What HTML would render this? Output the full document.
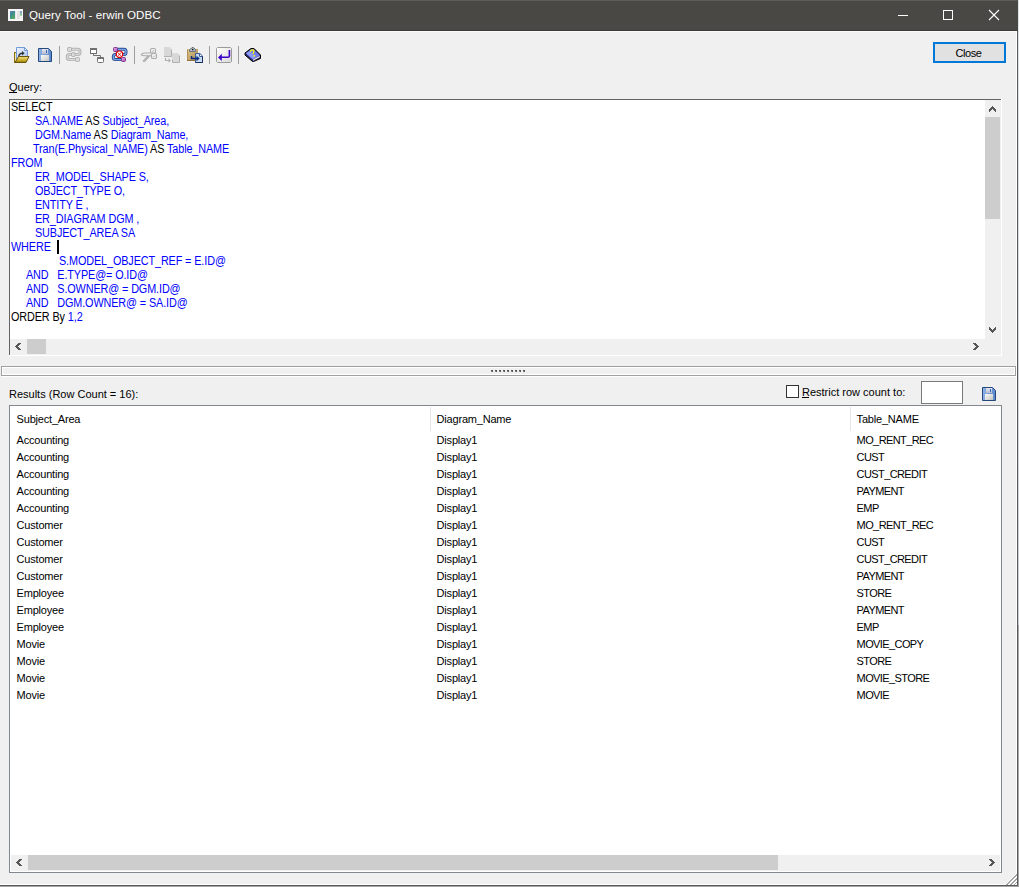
<!DOCTYPE html>
<html><head><meta charset="utf-8">
<style>
*{box-sizing:border-box}
html,body{margin:0;padding:0}
body{width:1019px;height:887px;position:relative;overflow:hidden;background:#f0f0f0;font-family:"Liberation Sans",sans-serif;color:#000}
.a{position:absolute}
.t{position:absolute;white-space:pre;line-height:14px;font-size:11px}
#title{left:0;top:0;width:1018px;height:31px;background:#4a4845}
#q{left:9px;top:99px;width:993px;height:257px;background:#fff}
.qt{position:absolute;white-space:pre;font-size:12px;line-height:14px;color:#0000ff;letter-spacing:-0.1px;transform:scaleX(0.9);transform-origin:0 0}
.k{color:#000}
#grid{left:9px;top:405px;width:993px;height:468px;border:1px solid #828790;background:#fff}
.gr{position:absolute;white-space:pre;font-size:11px;line-height:17px;height:17px;letter-spacing:-0.2px}
</style></head>
<body>
<!-- window frame -->
<div class="a" style="left:1017px;top:0;width:1px;height:886px;background:#5a5a5a"></div>
<div class="a" style="left:1018px;top:0;width:1px;height:625px;background:linear-gradient(#dfe4e9,#c8ced3)"></div><div class="a" style="left:1018px;top:625px;width:1px;height:262px;background:#a8a8a8"></div>
<div class="a" style="left:0;top:885px;width:1018px;height:1px;background:#5a5a5a"></div>
<div class="a" style="left:0;top:886px;width:1019px;height:1px;background:#a6a6a6"></div>
<div class="a" style="left:0;top:884px;width:1017px;height:1px;background:#fff"></div>
<div class="a" style="left:1016px;top:31px;width:1px;height:854px;background:#fff"></div>

<!-- title bar -->
<div id="title" class="a">
  <div class="a" style="left:0;top:0;width:1017px;height:1px;background:#5e5c59"></div>
  <div class="a" style="left:0;top:30px;width:1017px;height:1px;background:#3c3a37"></div>
</div>
<div class="a" style="left:0;top:31px;width:1017px;height:1px;background:#fafafa"></div>

<!-- title icon -->
<svg class="a" style="left:8px;top:9px" width="15" height="12" viewBox="0 0 15 12">
  <rect x="0" y="0" width="15" height="12" fill="#f6f6f8"/>
  <defs><linearGradient id="tg" x1="0" y1="0" x2="0.6" y2="1"><stop offset="0" stop-color="#6a88bc"/><stop offset="0.45" stop-color="#3d8a90"/><stop offset="1" stop-color="#55aa66"/></linearGradient>
  <linearGradient id="tg2" x1="0" y1="0" x2="0" y2="1"><stop offset="0" stop-color="#7a9cc8"/><stop offset="1" stop-color="#a8d8a0"/></linearGradient></defs>
  <rect x="2" y="2" width="5" height="8" fill="url(#tg)"/>
  <rect x="7" y="2" width="1" height="8" fill="#e8e4ee"/>
  <rect x="9" y="2" width="3" height="8" fill="#e2e2e2"/>
  <rect x="12" y="2" width="2" height="5" fill="url(#tg2)"/>
</svg>
<div class="t" style="left:29px;top:7.4px;font-size:11.6px;line-height:16px;color:#fff;letter-spacing:0.05px">Query Tool - erwin ODBC</div>
<!-- caption buttons -->
<div class="a" style="left:898px;top:15px;width:10px;height:1px;background:#fff"></div>
<div class="a" style="left:943px;top:10px;width:10px;height:10px;border:1px solid #fff"></div>
<svg class="a" style="left:988px;top:9px" width="12" height="12" viewBox="0 0 12 12"><path d="M1 1 L11 11 M11 1 L1 11" stroke="#fff" stroke-width="1.1"/></svg>

<!-- toolbar icons (page coordinates) -->
<svg class="a" style="left:0;top:0" width="1019" height="70" viewBox="0 0 1019 70">
 <defs>
  <linearGradient id="docg" x1="0" y1="0" x2="1" y2="1"><stop offset="0" stop-color="#f2f6fe"/><stop offset="1" stop-color="#a9c2ee"/></linearGradient>
  <linearGradient id="foldg" x1="0" y1="0" x2="0" y2="1"><stop offset="0" stop-color="#efe08a"/><stop offset="0.6" stop-color="#cdb22a"/><stop offset="1" stop-color="#8c7410"/></linearGradient>
  <linearGradient id="flop" x1="0" y1="0" x2="1" y2="0"><stop offset="0" stop-color="#8fb2e6"/><stop offset="1" stop-color="#5c88cc"/></linearGradient>
  <linearGradient id="lab" x1="0" y1="0" x2="1" y2="1"><stop offset="0" stop-color="#fbfbf6"/><stop offset="1" stop-color="#c4c4c4"/></linearGradient>
  <linearGradient id="shut" x1="0" y1="0" x2="0" y2="1"><stop offset="0" stop-color="#e6e8f0"/><stop offset="1" stop-color="#b6bccc"/></linearGradient>
  <linearGradient id="clipg" x1="0" y1="0" x2="1" y2="1"><stop offset="0" stop-color="#e0c890"/><stop offset="1" stop-color="#a88850"/></linearGradient>
  <linearGradient id="entg" x1="0" y1="0" x2="1" y2="1"><stop offset="0" stop-color="#ffffff"/><stop offset="1" stop-color="#d8d8d8"/></linearGradient>
  <linearGradient id="purp" x1="0" y1="0" x2="1" y2="1"><stop offset="0" stop-color="#f4a8f8"/><stop offset="1" stop-color="#a050b0"/></linearGradient>
 </defs>
 <!-- open -->
 <rect x="14.5" y="52.5" width="2.5" height="10" fill="#f6eaa8" stroke="#8a6d10"/>
 <path d="M16.5 47.5 H24.5 L27.5 50.5 V59.5 H16.5 Z" fill="url(#docg)" stroke="#7399d8"/>
 <path d="M24.5 47.5 V50.5 H27.5 Z" fill="#fff" stroke="#7399d8"/>
 <path d="M18.8 57 C18.8 54.5 20.5 53.2 22.5 53.2" fill="none" stroke="#2c3438" stroke-width="1.4"/>
 <path d="M22 51 L24.6 53.3 L22 55.6 Z" fill="#2c3438"/>
 <path d="M15 62.5 L18.5 56.5 H29 L26 62.5 Z" fill="url(#foldg)" stroke="#6b5508"/>
 <!-- save -->
 <path d="M38.5 48.5 H48.5 L51.5 51.5 V61.5 H38.5 Z" fill="url(#flop)" stroke="#24487a"/>
 <rect x="42" y="49" width="6" height="5" fill="url(#shut)"/>
 <rect x="46" y="50" width="1" height="3" fill="#2f62b8"/>
 <rect x="41" y="55" width="8" height="6" fill="url(#lab)"/>
 <!-- sep -->
 <rect x="59" y="46" width="1" height="18" fill="#a0a0a0"/>
 <!-- chain grey -->
 <g fill="none" stroke-linejoin="round">
  <path d="M70 49.3 H78 Q80 49.3 80 51.5 V52.5 Q80 54.6 78 54.6 H69.5 Q67.2 54.6 67.2 57 V57.5 Q67.2 59.6 69.5 59.6 H77" stroke="#b4b4b4" stroke-width="3"/>
  <path d="M70 49.3 H78 Q80 49.3 80 51.5 V52.5 Q80 54.6 78 54.6 H69.5 Q67.2 54.6 67.2 57 V57.5 Q67.2 59.6 69.5 59.6 H77" stroke="#e2e2e2" stroke-width="1"/>
 </g>
 <rect x="67.5" y="47.5" width="4" height="4" rx="1" fill="#dcdcdc" stroke="#b0b0b0"/>
 <rect x="71.5" y="52.5" width="3.5" height="4" rx="1" fill="#dcdcdc" stroke="#b0b0b0"/>
 <rect x="75.5" y="57.5" width="4" height="4" rx="1" fill="#dcdcdc" stroke="#b0b0b0"/>
 <!-- tree -->
 <rect x="90.5" y="48.5" width="6" height="5" fill="#fff" stroke="#707070"/>
 <rect x="90" y="48" width="7" height="2" fill="#707070"/>
 <path d="M93.5 54 V55.5 H100.5 V57" fill="none" stroke="#707070"/>
 <rect x="97.5" y="57.5" width="6" height="5" rx="1" fill="#fff" stroke="#707070"/>
 <rect x="97" y="57" width="7" height="2" rx="1" fill="#707070"/>
 <!-- chain red -->
 <g fill="none" stroke-linejoin="round">
  <path d="M116 49.3 H124 Q126 49.3 126 51.5 V52.5 Q126 54.6 124 54.6 H115.5 Q113.3 54.6 113.3 57 V57.5 Q113.3 59.6 115.5 59.6 H123" stroke="#2c4a86" stroke-width="3"/>
  <path d="M116 49.3 H124 Q126 49.3 126 51.5 V52.5 Q126 54.6 124 54.6 H115.5 Q113.3 54.6 113.3 57 V57.5 Q113.3 59.6 115.5 59.6 H123" stroke="#74a4f4" stroke-width="1.3"/>
 </g>
 <rect x="113.5" y="47.5" width="4" height="4" rx="1" fill="url(#purp)" stroke="#7a3a8a"/>
 <rect x="121.5" y="57.5" width="4" height="4" rx="1" fill="url(#purp)" stroke="#7a3a8a"/>
 <path d="M118.2 51 H120.8 L122.6 52.8 V55.6 L120.8 57.4 H118.2 L116.4 55.6 V52.8 Z" fill="#fff" stroke="#e00000" stroke-width="1.2"/>
 <path d="M118.2 53 L120.8 55.6 M120.8 53 L118.2 55.6" stroke="#d00000" stroke-width="1"/>
 <!-- sep -->
 <rect x="134" y="46" width="1" height="18" fill="#a0a0a0"/>
 <!-- scissors -->
 <g fill="none" stroke="#acacac" stroke-width="1.1">
  <rect x="150.5" y="48.5" width="5" height="4.5" rx="1.3"/>
  <rect x="151.5" y="53.5" width="5" height="5" rx="1.3"/>
  <path d="M151 53 H145 Q141.5 53.5 141.3 54.8 Q142 55.6 145 55.7 H151.5"/>
  <path d="M149.5 55.8 L144.8 61.2 Q143.8 61.8 143.2 61 L148 55.8"/>
 </g>
 <path d="M152.3 51.8 L153.8 50.2 M153.3 57.3 L154.8 55.7" stroke="#acacac" stroke-width="1"/>
 <!-- copy -->
 <path d="M164 47 H169.5 L172 49.5 V56.5 H164 Z" fill="#d8d8d8"/>
 <path d="M171.5 49.5 V56.5 H164" fill="none" stroke="#b0b0b0"/>
 <path d="M172 53 H177.5 L180 55.5 V62.5 H172 Z" fill="#d8d8d8"/>
 <path d="M179.5 55.5 V62.5 H172.5 V60" fill="none" stroke="#b0b0b0"/>
 <path d="M165.5 58 V60.5 H169" fill="none" stroke="#b0b0b0" stroke-width="1.2"/>
 <path d="M168.5 58.3 L171 60.5 L168.5 62.8 Z" fill="#b0b0b0"/>
 <!-- paste -->
 <rect x="187" y="49" width="11" height="12" fill="url(#clipg)"/>
 <path d="M187.5 49.5 V60.5 H197.5" fill="none" stroke="#b09058" stroke-width="1"/>
 <rect x="187" y="60" width="11" height="1" fill="#8a6a30" opacity="0.7"/>
 <path d="M189.5 51.5 V50 Q190 48.5 191.5 48.5 L192 47.5 H193.5 L194 48.5 Q195.5 48.5 195.5 50 V51.5 Z" fill="#b8bec8" stroke="#6a7280"/>
 <circle cx="192.7" cy="49.6" r="0.8" fill="#111"/>
 <path d="M195 53 H200 L203 56 V63 H195 Z" fill="#c8dcf6"/>
 <path d="M195.5 53.5 V62.5 H202.5 V56 L199.8 53.5 Z" fill="none" stroke="#3a5a8e"/>
 <path d="M202.5 56.5 V62.5 H195.5" fill="none" stroke="#1c2e5a"/>
 <path d="M199.5 54 V56.5 H202" fill="#fff" stroke="#3a5a8e"/>
 <path d="M191.5 56 V58.5 H197" fill="none" stroke="#0b2a7a" stroke-width="1.5"/>
 <path d="M196.5 55.8 L199.7 58.5 L196.5 61.2 Z" fill="#0b2a7a"/>
 <!-- sep -->
 <rect x="209" y="46" width="1" height="18" fill="#a0a0a0"/>
 <!-- enter -->
 <path d="M217.5 47.5 H230.5 L231.5 48.5 V61.5 L230.5 62.5 H217.5 L216.5 61.5 V48.5 Z" fill="url(#entg)" stroke="#9a9a9a"/>
 <path d="M229.4 50 V56 Q229.4 57.3 228 57.3 H221" fill="none" stroke="#3c00c8" stroke-width="1.6"/>
 <path d="M218 57.4 L221.8 53.8 V61 Z" fill="#3c00c8"/>
 <!-- sep -->
 <rect x="238" y="46" width="1" height="18" fill="#a0a0a0"/>
 <!-- book -->
 <path d="M245 53 L251 48.5 H254 L260.5 55 V58.5 L253.5 61.5 H252.5 L245 55 Z" fill="#2a2a70" stroke="#000" stroke-width="1" stroke-linejoin="bevel"/>
 <path d="M245.8 53.3 L251.3 49.3 H253.6 L259.8 55.4 L253 59.8 Z" fill="#6f7ef0"/>
 <path d="M246.2 53.6 L249.8 51 L255.5 57 L252.8 59 Z" fill="#9aa8ff" opacity="0.7"/>
 <path d="M253.2 60.2 L259.8 56.4" fill="none" stroke="#f2eed6" stroke-width="1.1"/>
 <path d="M250.3 51.6 Q250.8 49.8 252.6 49.9 Q254.3 50.2 253.8 51.9 Q253.4 52.9 253 53.9" fill="none" stroke="#ffff00" stroke-width="1.3"/>
 <rect x="253.6" y="55" width="1.6" height="1.5" fill="#ffff00"/>
</svg>
<!-- close button -->
<div class="a" style="left:933px;top:42px;width:73px;height:21px;border:2px solid #0078d7;background:#e1e1e1"></div>
<div class="t" style="left:932px;top:46px;width:73px;text-align:center;font-size:11px;letter-spacing:-0.4px">Close</div>
<div class="t" style="left:9px;top:80px;font-size:11px">Query:</div><div class="a" style="left:9px;top:92px;width:8px;height:1px;background:#000"></div>

<!-- query box -->
<div id="q" class="a"></div>
<div class="a" style="left:9px;top:99px;width:992px;height:1px;background:#646464"></div>
<div class="a" style="left:9px;top:99px;width:1px;height:256px;background:#646464"></div>
<div class="qt" style="left:11px;top:100px"><span class="k">SELECT</span></div>
<div class="qt" style="left:35px;top:114px">SA.NAME <span class="k">AS</span> Subject_Area,</div>
<div class="qt" style="left:35px;top:128px">DGM.Name <span class="k">AS</span> Diagram_Name,</div>
<div class="qt" style="left:33px;top:142px">Tran(E.Physical_NAME) <span class="k">AS</span> Table_NAME</div>
<div class="qt" style="left:11px;top:156px">FROM</div>
<div class="qt" style="left:35px;top:170px">ER_MODEL_SHAPE S,</div>
<div class="qt" style="left:35px;top:184px">OBJECT_TYPE O,</div>
<div class="qt" style="left:35px;top:198px">ENTITY E ,</div>
<div class="qt" style="left:35px;top:212px">ER_DIAGRAM DGM ,</div>
<div class="qt" style="left:35px;top:226px">SUBJECT_AREA SA</div>
<div class="qt" style="left:11px;top:240px">WHERE</div>
<div class="qt" style="left:59px;top:254px">S.MODEL_OBJECT_REF = E.ID@</div>
<div class="qt" style="left:26px;top:268px">AND   E.TYPE@= O.ID@</div>
<div class="qt" style="left:26px;top:282px">AND   S.OWNER@ = DGM.ID@</div>
<div class="qt" style="left:26px;top:296px">AND   DGM.OWNER@ = SA.ID@</div>
<div class="qt" style="left:11px;top:310px"><span class="k">ORDER By</span> 1,2</div>

<div class="a" style="left:57px;top:240px;width:2px;height:14px;background:#000"></div>
<!-- vscroll -->
<div class="a" style="left:985px;top:100px;width:16px;height:239px;background:#f0f0f0"></div>
<div class="a" style="left:985px;top:117px;width:15px;height:102px;background:#cdcdcd"></div>
<!-- hscroll -->
<div class="a" style="left:10px;top:339px;width:991px;height:16px;background:#f0f0f0"></div>
<div class="a" style="left:27px;top:339px;width:19px;height:15px;background:#cdcdcd"></div>

<!-- splitter -->
<div class="a" style="left:1px;top:366px;width:1015px;height:10px;border:1px solid #a0a0a0"></div>
<div class="a" style="left:2px;top:367px;width:1013px;height:8px;border:1px solid #fff"></div>
<div class="a" style="left:1px;top:376px;width:1015px;height:1px;background:#fff"></div>
<svg class="a" style="left:490px;top:369px" width="38" height="4" viewBox="0 0 38 4" shape-rendering="crispEdges"><rect x="1" y="1" width="2" height="1" fill="#555"/><rect x="2" y="2" width="1" height="1" fill="#555"/><rect x="1" y="2" width="1" height="1" fill="#8a8a8a"/><rect x="5" y="1" width="2" height="1" fill="#555"/><rect x="6" y="2" width="1" height="1" fill="#555"/><rect x="5" y="2" width="1" height="1" fill="#8a8a8a"/><rect x="9" y="1" width="2" height="1" fill="#555"/><rect x="10" y="2" width="1" height="1" fill="#555"/><rect x="9" y="2" width="1" height="1" fill="#8a8a8a"/><rect x="13" y="1" width="2" height="1" fill="#555"/><rect x="14" y="2" width="1" height="1" fill="#555"/><rect x="13" y="2" width="1" height="1" fill="#8a8a8a"/><rect x="17" y="1" width="2" height="1" fill="#555"/><rect x="18" y="2" width="1" height="1" fill="#555"/><rect x="17" y="2" width="1" height="1" fill="#8a8a8a"/><rect x="21" y="1" width="2" height="1" fill="#555"/><rect x="22" y="2" width="1" height="1" fill="#555"/><rect x="21" y="2" width="1" height="1" fill="#8a8a8a"/><rect x="25" y="1" width="2" height="1" fill="#555"/><rect x="26" y="2" width="1" height="1" fill="#555"/><rect x="25" y="2" width="1" height="1" fill="#8a8a8a"/><rect x="29" y="1" width="2" height="1" fill="#555"/><rect x="30" y="2" width="1" height="1" fill="#555"/><rect x="29" y="2" width="1" height="1" fill="#8a8a8a"/><rect x="33" y="1" width="2" height="1" fill="#555"/><rect x="34" y="2" width="1" height="1" fill="#555"/><rect x="33" y="2" width="1" height="1" fill="#8a8a8a"/></svg>
<div class="t" style="left:9px;top:387px;font-size:11px;letter-spacing:0px">Results (Row Count = 16):</div>
<div class="a" style="left:786px;top:385px;width:13px;height:13px;border:1px solid #333;background:#fff"></div>
<div class="t" style="left:802px;top:385px;font-size:11px">Restrict row count to:</div><div class="a" style="left:802px;top:397px;width:7px;height:1px;background:#000"></div>
<div class="a" style="left:921px;top:381px;width:42px;height:23px;border:1px solid #7a7a7a;background:#fff"></div>
<svg class="a" style="left:981px;top:386px" width="16" height="16" viewBox="981 386 16 16">
 <path d="M982.5 387.5 H992.5 L995.5 390.5 V400.5 H982.5 Z" fill="url(#flop)" stroke="#24487a"/>
 <rect x="986" y="388" width="6" height="5" fill="url(#shut)"/>
 <rect x="990" y="389" width="1" height="3" fill="#2f62b8"/>
 <rect x="985" y="394" width="8" height="6" fill="url(#lab)"/>
</svg>
<!-- grid -->
<div id="grid" class="a"></div>
<div class="gr" style="left:16.6px;top:411px">Subject_Area</div>
<div class="gr" style="left:436.6px;top:411px">Diagram_Name</div>
<div class="gr" style="left:856.6px;top:411px">Table_NAME</div>
<div class="a" style="left:430px;top:407px;width:1px;height:24px;background:#e5e5e5"></div>
<div class="a" style="left:850px;top:407px;width:1px;height:24px;background:#e5e5e5"></div>
<div class="gr" style="left:16.6px;top:432px">Accounting</div><div class="gr" style="left:436.6px;top:432px">Display1</div><div class="gr" style="left:856.6px;top:432px;letter-spacing:-0.6px">MO_RENT_REC</div>
<div class="gr" style="left:16.6px;top:449px">Accounting</div><div class="gr" style="left:436.6px;top:449px">Display1</div><div class="gr" style="left:856.6px;top:449px;letter-spacing:-0.6px">CUST</div>
<div class="gr" style="left:16.6px;top:466px">Accounting</div><div class="gr" style="left:436.6px;top:466px">Display1</div><div class="gr" style="left:856.6px;top:466px;letter-spacing:-0.6px">CUST_CREDIT</div>
<div class="gr" style="left:16.6px;top:483px">Accounting</div><div class="gr" style="left:436.6px;top:483px">Display1</div><div class="gr" style="left:856.6px;top:483px;letter-spacing:-0.6px">PAYMENT</div>
<div class="gr" style="left:16.6px;top:500px">Accounting</div><div class="gr" style="left:436.6px;top:500px">Display1</div><div class="gr" style="left:856.6px;top:500px;letter-spacing:-0.6px">EMP</div>
<div class="gr" style="left:16.6px;top:517px">Customer</div><div class="gr" style="left:436.6px;top:517px">Display1</div><div class="gr" style="left:856.6px;top:517px;letter-spacing:-0.6px">MO_RENT_REC</div>
<div class="gr" style="left:16.6px;top:534px">Customer</div><div class="gr" style="left:436.6px;top:534px">Display1</div><div class="gr" style="left:856.6px;top:534px;letter-spacing:-0.6px">CUST</div>
<div class="gr" style="left:16.6px;top:551px">Customer</div><div class="gr" style="left:436.6px;top:551px">Display1</div><div class="gr" style="left:856.6px;top:551px;letter-spacing:-0.6px">CUST_CREDIT</div>
<div class="gr" style="left:16.6px;top:568px">Customer</div><div class="gr" style="left:436.6px;top:568px">Display1</div><div class="gr" style="left:856.6px;top:568px;letter-spacing:-0.6px">PAYMENT</div>
<div class="gr" style="left:16.6px;top:585px">Employee</div><div class="gr" style="left:436.6px;top:585px">Display1</div><div class="gr" style="left:856.6px;top:585px;letter-spacing:-0.6px">STORE</div>
<div class="gr" style="left:16.6px;top:602px">Employee</div><div class="gr" style="left:436.6px;top:602px">Display1</div><div class="gr" style="left:856.6px;top:602px;letter-spacing:-0.6px">PAYMENT</div>
<div class="gr" style="left:16.6px;top:619px">Employee</div><div class="gr" style="left:436.6px;top:619px">Display1</div><div class="gr" style="left:856.6px;top:619px;letter-spacing:-0.6px">EMP</div>
<div class="gr" style="left:16.6px;top:636px">Movie</div><div class="gr" style="left:436.6px;top:636px">Display1</div><div class="gr" style="left:856.6px;top:636px;letter-spacing:-0.6px">MOVIE_COPY</div>
<div class="gr" style="left:16.6px;top:653px">Movie</div><div class="gr" style="left:436.6px;top:653px">Display1</div><div class="gr" style="left:856.6px;top:653px;letter-spacing:-0.6px">STORE</div>
<div class="gr" style="left:16.6px;top:670px">Movie</div><div class="gr" style="left:436.6px;top:670px">Display1</div><div class="gr" style="left:856.6px;top:670px;letter-spacing:-0.6px">MOVIE_STORE</div>
<div class="gr" style="left:16.6px;top:687px">Movie</div><div class="gr" style="left:436.6px;top:687px">Display1</div><div class="gr" style="left:856.6px;top:687px;letter-spacing:-0.6px">MOVIE</div>

<div class="a" style="left:11px;top:855px;width:989px;height:16px;background:#f0f0f0"></div>
<div class="a" style="left:28px;top:855px;width:750px;height:15px;background:#cdcdcd"></div>
<!-- chevrons -->
<svg class="a" style="left:0;top:0" width="1019" height="887" viewBox="0 0 1019 887" shape-rendering="crispEdges"><g fill="#565656"><rect x="989" y="109" width="1" height="1"/><rect x="989" y="110" width="1" height="1"/><rect x="989" y="111" width="1" height="1"/><rect x="990" y="108" width="1" height="1"/><rect x="990" y="109" width="1" height="1"/><rect x="990" y="110" width="1" height="1"/><rect x="991" y="107" width="1" height="1"/><rect x="991" y="108" width="1" height="1"/><rect x="991" y="109" width="1" height="1"/><rect x="992" y="106" width="1" height="1"/><rect x="992" y="107" width="1" height="1"/><rect x="992" y="108" width="1" height="1"/><rect x="993" y="107" width="1" height="1"/><rect x="993" y="108" width="1" height="1"/><rect x="993" y="109" width="1" height="1"/><rect x="994" y="108" width="1" height="1"/><rect x="994" y="109" width="1" height="1"/><rect x="994" y="110" width="1" height="1"/><rect x="995" y="109" width="1" height="1"/><rect x="995" y="110" width="1" height="1"/><rect x="995" y="111" width="1" height="1"/><rect x="989" y="329" width="1" height="1"/><rect x="989" y="328" width="1" height="1"/><rect x="989" y="327" width="1" height="1"/><rect x="990" y="330" width="1" height="1"/><rect x="990" y="329" width="1" height="1"/><rect x="990" y="328" width="1" height="1"/><rect x="991" y="331" width="1" height="1"/><rect x="991" y="330" width="1" height="1"/><rect x="991" y="329" width="1" height="1"/><rect x="992" y="332" width="1" height="1"/><rect x="992" y="331" width="1" height="1"/><rect x="992" y="330" width="1" height="1"/><rect x="993" y="331" width="1" height="1"/><rect x="993" y="330" width="1" height="1"/><rect x="993" y="329" width="1" height="1"/><rect x="994" y="330" width="1" height="1"/><rect x="994" y="329" width="1" height="1"/><rect x="994" y="328" width="1" height="1"/><rect x="995" y="329" width="1" height="1"/><rect x="995" y="328" width="1" height="1"/><rect x="995" y="327" width="1" height="1"/><rect x="18" y="343" width="1" height="1"/><rect x="19" y="343" width="1" height="1"/><rect x="20" y="343" width="1" height="1"/><rect x="17" y="344" width="1" height="1"/><rect x="18" y="344" width="1" height="1"/><rect x="19" y="344" width="1" height="1"/><rect x="16" y="345" width="1" height="1"/><rect x="17" y="345" width="1" height="1"/><rect x="18" y="345" width="1" height="1"/><rect x="15" y="346" width="1" height="1"/><rect x="16" y="346" width="1" height="1"/><rect x="17" y="346" width="1" height="1"/><rect x="16" y="347" width="1" height="1"/><rect x="17" y="347" width="1" height="1"/><rect x="18" y="347" width="1" height="1"/><rect x="17" y="348" width="1" height="1"/><rect x="18" y="348" width="1" height="1"/><rect x="19" y="348" width="1" height="1"/><rect x="18" y="349" width="1" height="1"/><rect x="19" y="349" width="1" height="1"/><rect x="20" y="349" width="1" height="1"/><rect x="975" y="343" width="1" height="1"/><rect x="974" y="343" width="1" height="1"/><rect x="973" y="343" width="1" height="1"/><rect x="976" y="344" width="1" height="1"/><rect x="975" y="344" width="1" height="1"/><rect x="974" y="344" width="1" height="1"/><rect x="977" y="345" width="1" height="1"/><rect x="976" y="345" width="1" height="1"/><rect x="975" y="345" width="1" height="1"/><rect x="978" y="346" width="1" height="1"/><rect x="977" y="346" width="1" height="1"/><rect x="976" y="346" width="1" height="1"/><rect x="977" y="347" width="1" height="1"/><rect x="976" y="347" width="1" height="1"/><rect x="975" y="347" width="1" height="1"/><rect x="976" y="348" width="1" height="1"/><rect x="975" y="348" width="1" height="1"/><rect x="974" y="348" width="1" height="1"/><rect x="975" y="349" width="1" height="1"/><rect x="974" y="349" width="1" height="1"/><rect x="973" y="349" width="1" height="1"/><rect x="19" y="859" width="1" height="1"/><rect x="20" y="859" width="1" height="1"/><rect x="21" y="859" width="1" height="1"/><rect x="18" y="860" width="1" height="1"/><rect x="19" y="860" width="1" height="1"/><rect x="20" y="860" width="1" height="1"/><rect x="17" y="861" width="1" height="1"/><rect x="18" y="861" width="1" height="1"/><rect x="19" y="861" width="1" height="1"/><rect x="16" y="862" width="1" height="1"/><rect x="17" y="862" width="1" height="1"/><rect x="18" y="862" width="1" height="1"/><rect x="17" y="863" width="1" height="1"/><rect x="18" y="863" width="1" height="1"/><rect x="19" y="863" width="1" height="1"/><rect x="18" y="864" width="1" height="1"/><rect x="19" y="864" width="1" height="1"/><rect x="20" y="864" width="1" height="1"/><rect x="19" y="865" width="1" height="1"/><rect x="20" y="865" width="1" height="1"/><rect x="21" y="865" width="1" height="1"/><rect x="991" y="859" width="1" height="1"/><rect x="990" y="859" width="1" height="1"/><rect x="989" y="859" width="1" height="1"/><rect x="992" y="860" width="1" height="1"/><rect x="991" y="860" width="1" height="1"/><rect x="990" y="860" width="1" height="1"/><rect x="993" y="861" width="1" height="1"/><rect x="992" y="861" width="1" height="1"/><rect x="991" y="861" width="1" height="1"/><rect x="994" y="862" width="1" height="1"/><rect x="993" y="862" width="1" height="1"/><rect x="992" y="862" width="1" height="1"/><rect x="993" y="863" width="1" height="1"/><rect x="992" y="863" width="1" height="1"/><rect x="991" y="863" width="1" height="1"/><rect x="992" y="864" width="1" height="1"/><rect x="991" y="864" width="1" height="1"/><rect x="990" y="864" width="1" height="1"/><rect x="991" y="865" width="1" height="1"/><rect x="990" y="865" width="1" height="1"/><rect x="989" y="865" width="1" height="1"/></g></svg>
<!-- size grip -->
<svg class="a" style="left:1003px;top:871px" width="14" height="14" viewBox="0 0 14 14" shape-rendering="crispEdges"><rect x="2" y="13" width="1" height="1" fill="#ffffff"/><rect x="3" y="12" width="1" height="1" fill="#ffffff"/><rect x="3" y="13" width="1" height="1" fill="#a4a4a4"/><rect x="4" y="11" width="1" height="1" fill="#ffffff"/><rect x="4" y="12" width="1" height="1" fill="#a4a4a4"/><rect x="4" y="13" width="1" height="1" fill="#a4a4a4"/><rect x="5" y="10" width="1" height="1" fill="#ffffff"/><rect x="5" y="11" width="1" height="1" fill="#a4a4a4"/><rect x="5" y="12" width="1" height="1" fill="#a4a4a4"/><rect x="5" y="13" width="1" height="1" fill="#ffffff"/><rect x="6" y="9" width="1" height="1" fill="#ffffff"/><rect x="6" y="10" width="1" height="1" fill="#a4a4a4"/><rect x="6" y="11" width="1" height="1" fill="#a4a4a4"/><rect x="6" y="12" width="1" height="1" fill="#ffffff"/><rect x="6" y="13" width="1" height="1" fill="#ffffff"/><rect x="7" y="8" width="1" height="1" fill="#ffffff"/><rect x="7" y="9" width="1" height="1" fill="#a4a4a4"/><rect x="7" y="10" width="1" height="1" fill="#a4a4a4"/><rect x="7" y="11" width="1" height="1" fill="#ffffff"/><rect x="7" y="12" width="1" height="1" fill="#ffffff"/><rect x="7" y="13" width="1" height="1" fill="#a4a4a4"/><rect x="8" y="7" width="1" height="1" fill="#ffffff"/><rect x="8" y="8" width="1" height="1" fill="#a4a4a4"/><rect x="8" y="9" width="1" height="1" fill="#a4a4a4"/><rect x="8" y="10" width="1" height="1" fill="#ffffff"/><rect x="8" y="11" width="1" height="1" fill="#ffffff"/><rect x="8" y="12" width="1" height="1" fill="#a4a4a4"/><rect x="8" y="13" width="1" height="1" fill="#a4a4a4"/><rect x="9" y="6" width="1" height="1" fill="#ffffff"/><rect x="9" y="7" width="1" height="1" fill="#a4a4a4"/><rect x="9" y="8" width="1" height="1" fill="#a4a4a4"/><rect x="9" y="9" width="1" height="1" fill="#ffffff"/><rect x="9" y="10" width="1" height="1" fill="#ffffff"/><rect x="9" y="11" width="1" height="1" fill="#a4a4a4"/><rect x="9" y="12" width="1" height="1" fill="#a4a4a4"/><rect x="9" y="13" width="1" height="1" fill="#ffffff"/><rect x="10" y="5" width="1" height="1" fill="#ffffff"/><rect x="10" y="6" width="1" height="1" fill="#a4a4a4"/><rect x="10" y="7" width="1" height="1" fill="#a4a4a4"/><rect x="10" y="8" width="1" height="1" fill="#ffffff"/><rect x="10" y="9" width="1" height="1" fill="#ffffff"/><rect x="10" y="10" width="1" height="1" fill="#a4a4a4"/><rect x="10" y="11" width="1" height="1" fill="#a4a4a4"/><rect x="10" y="12" width="1" height="1" fill="#ffffff"/><rect x="10" y="13" width="1" height="1" fill="#ffffff"/><rect x="11" y="4" width="1" height="1" fill="#ffffff"/><rect x="11" y="5" width="1" height="1" fill="#a4a4a4"/><rect x="11" y="6" width="1" height="1" fill="#a4a4a4"/><rect x="11" y="7" width="1" height="1" fill="#ffffff"/><rect x="11" y="8" width="1" height="1" fill="#ffffff"/><rect x="11" y="9" width="1" height="1" fill="#a4a4a4"/><rect x="11" y="10" width="1" height="1" fill="#a4a4a4"/><rect x="11" y="11" width="1" height="1" fill="#ffffff"/><rect x="11" y="12" width="1" height="1" fill="#ffffff"/><rect x="11" y="13" width="1" height="1" fill="#a4a4a4"/><rect x="12" y="3" width="1" height="1" fill="#ffffff"/><rect x="12" y="4" width="1" height="1" fill="#a4a4a4"/><rect x="12" y="5" width="1" height="1" fill="#a4a4a4"/><rect x="12" y="6" width="1" height="1" fill="#ffffff"/><rect x="12" y="7" width="1" height="1" fill="#ffffff"/><rect x="12" y="8" width="1" height="1" fill="#a4a4a4"/><rect x="12" y="9" width="1" height="1" fill="#a4a4a4"/><rect x="12" y="10" width="1" height="1" fill="#ffffff"/><rect x="12" y="11" width="1" height="1" fill="#ffffff"/><rect x="12" y="12" width="1" height="1" fill="#a4a4a4"/><rect x="12" y="13" width="1" height="1" fill="#ffffff"/><rect x="13" y="2" width="1" height="1" fill="#ffffff"/><rect x="13" y="3" width="1" height="1" fill="#a4a4a4"/><rect x="13" y="4" width="1" height="1" fill="#a4a4a4"/><rect x="13" y="5" width="1" height="1" fill="#ffffff"/><rect x="13" y="6" width="1" height="1" fill="#ffffff"/><rect x="13" y="7" width="1" height="1" fill="#a4a4a4"/><rect x="13" y="8" width="1" height="1" fill="#a4a4a4"/><rect x="13" y="9" width="1" height="1" fill="#ffffff"/><rect x="13" y="10" width="1" height="1" fill="#ffffff"/><rect x="13" y="11" width="1" height="1" fill="#a4a4a4"/><rect x="13" y="12" width="1" height="1" fill="#ffffff"/><rect x="13" y="13" width="1" height="1" fill="#ffffff"/></svg>
</body></html>
